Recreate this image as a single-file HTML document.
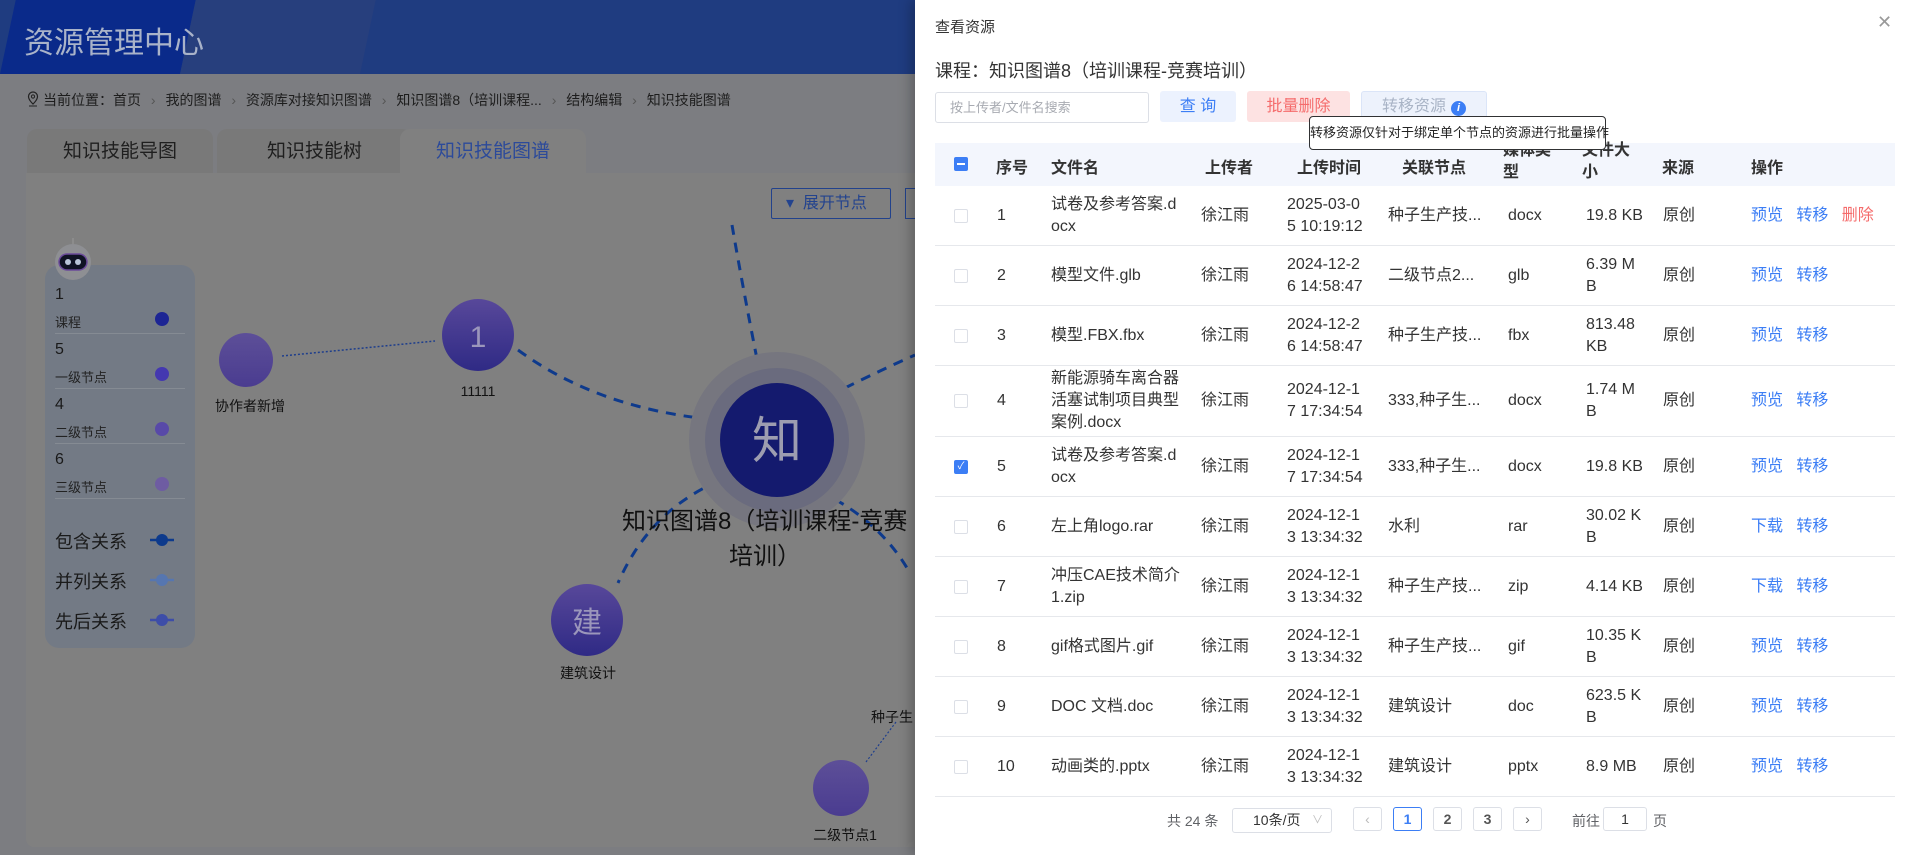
<!DOCTYPE html>
<html><head><meta charset="utf-8"><style>
*{margin:0;padding:0;box-sizing:border-box}
body{width:1911px;height:855px;overflow:hidden;position:relative;font-family:"Liberation Sans","Noto Sans CJK SC",sans-serif;background:#7c7d81;color:#1a1a1a}
.a{position:absolute;white-space:nowrap}
.hd{position:absolute;left:0;top:0;width:915px;height:74px;background:#1f3c80;overflow:hidden}
.card{position:absolute;left:26px;top:173px;width:900px;height:674px;background:#808080;border-radius:0 0 8px 8px}
.tab{position:absolute;top:129px;height:46px;border-radius:10px 10px 0 0;font-size:19px;text-align:center;line-height:46px;color:#1f1f1f}
.lg{position:absolute;left:45px;top:265px;width:150px;height:383px;background:#737a85;border-radius:14px}
.drawer{position:absolute;left:915px;top:0;width:996px;height:855px;background:#fff;box-shadow:-4px 0 12px rgba(0,0,0,.25)}
.btn{position:absolute;top:91px;height:31px;border-radius:3px;font-size:16px;line-height:31px;text-align:center}
.row{position:absolute;left:20px;width:960px;border-bottom:1px solid #e6e8ec;font-size:16px;color:#333}
.row .a{top:50%;transform:translateY(-50%);line-height:22px}
.cb{position:absolute;left:19px;top:50%;margin-top:-7px;width:14px;height:14px;border:1px solid #dcdfe6;border-radius:2px;background:#fff}
.bl{color:#3c7ef5}.rd{color:#f56c6c}
.pg{position:absolute;top:807px;height:24px;border:1px solid #dcdfe6;border-radius:3px;font-size:14px;text-align:center;line-height:22px;font-weight:bold;color:#555}
</style></head><body>
<div class="hd">
 <div style="position:absolute;left:0;top:0;width:180px;height:74px;background:#0a2a8a;transform:skewX(-12deg);transform-origin:0 100%"></div>
 <div style="position:absolute;left:180px;top:0;width:180px;height:74px;background:#273f7d;transform:skewX(-12deg);transform-origin:0 100%"></div>
 <div class="a" style="left:24px;top:18px;font-size:30px;color:#a9b3c9">资源管理中心</div>
</div>
<svg class="a" style="left:26px;top:90px" width="14" height="18" viewBox="0 0 14 18"><path d="M7 2a4.5 4.5 0 0 0-4.5 4.5C2.5 10 7 14 7 14s4.5-4 4.5-7.5A4.5 4.5 0 0 0 7 2z" fill="none" stroke="#222" stroke-width="1.2"/><circle cx="7" cy="6.5" r="1.6" fill="none" stroke="#222"/><path d="M3 16h8" stroke="#222"/></svg>
<div class="a" style="left:43px;top:90px;font-size:14px;color:#1d1d1d">当前位置：首页 <span style="color:#555;margin:0 6px">›</span> 我的图谱 <span style="color:#555;margin:0 6px">›</span> 资源库对接知识图谱 <span style="color:#555;margin:0 6px">›</span> 知识图谱8（培训课程... <span style="color:#555;margin:0 6px">›</span> 结构编辑 <span style="color:#555;margin:0 6px">›</span> 知识技能图谱</div>
<div class="tab" style="left:27px;width:186px;background:#797979">知识技能导图</div>
<div class="tab" style="left:217px;width:195px;background:#797979">知识技能树</div>
<div class="card"></div>
<div class="tab" style="left:400px;width:186px;background:#808080;color:#2c4a9a">知识技能图谱</div>
<div class="a" style="left:771px;top:188px;width:120px;height:31px;border:1px solid #22428c;border-radius:2px;font-size:16px;color:#23438e;line-height:29px;padding-left:14px">▾&nbsp; 展开节点</div>
<div class="a" style="left:905px;top:188px;width:12px;height:31px;border:1px solid #22428c;border-right:none"></div>
<svg class="a" style="left:0;top:0" width="915" height="855">
 <g fill="none" stroke="#0e3a8c" stroke-width="3" stroke-dasharray="10 8">
  <path d="M518 350 Q600 410 719 420"/>
  <path d="M732 225 Q745 300 762 384"/>
  <path d="M829 396 Q870 375 915 355"/>
  <path d="M719 481 Q650 510 618 583"/>
  <path d="M819 491 Q880 520 910 573"/>
 </g>
 <path d="M282 356 L435 341" stroke="#1e3e8c" stroke-width="1.5" stroke-dasharray="2 2" fill="none"/>
 <path d="M866 762 L896 722" stroke="#1e3e8c" stroke-width="1.2" stroke-dasharray="2 2" fill="none"/>
 <defs><linearGradient id="g" x1="0" y1="0" x2="0" y2="1"><stop offset="0" stop-color="#58489a"/><stop offset="1" stop-color="#2f2a85"/></linearGradient>
 <linearGradient id="g2" x1="0" y1="0" x2="0" y2="1"><stop offset="0" stop-color="#5d4f98"/><stop offset="1" stop-color="#4a3c90"/></linearGradient></defs>
 <circle cx="777" cy="440" r="88" fill="#76767f"/><circle cx="777" cy="440" r="72" fill="#6a6b7e"/><circle cx="777" cy="440" r="57" fill="#141a6e"/>
 <circle cx="478" cy="335" r="36" fill="url(#g)"/>
 <circle cx="246" cy="360" r="27" fill="url(#g2)"/>
 <circle cx="587" cy="620" r="36" fill="url(#g)"/>
 <circle cx="841" cy="788" r="28" fill="url(#g2)"/>
 <text x="777" y="458" font-size="50" fill="#9d9db0" text-anchor="middle" font-family="Noto Sans CJK SC">知</text>
 <text x="478" y="347" font-size="30" fill="#9b96bb" text-anchor="middle">1</text>
 <text x="587" y="633" font-size="30" fill="#9b96bb" text-anchor="middle" font-family="Noto Sans CJK SC">建</text>
 <g font-family="Liberation Sans,Noto Sans CJK SC" fill="#111" text-anchor="middle">
 <text x="478" y="396" font-size="14">11111</text>
 <text x="250" y="411" font-size="14">协作者新增</text>
 <text x="588" y="678" font-size="14">建筑设计</text>
 <text x="845" y="840" font-size="14">二级节点1</text>
 <text x="871" y="722" font-size="14" text-anchor="start">种子生</text>
 <text x="622" y="529" font-size="24" text-anchor="start">知识图谱8（培训课程-竞赛</text>
 <text x="765" y="564" font-size="24">培训）</text>
 </g>
</svg>
<div class="lg"></div>
<svg class="a" style="left:52px;top:230px" width="42" height="55"><circle cx="21" cy="32" r="18" fill="#8e8f93"/><rect x="7" y="24" width="28" height="16" rx="8" fill="#0f1324" stroke="#6a4a9a" stroke-width="1.5"/><circle cx="16" cy="32" r="3" fill="#b8c4d8"/><circle cx="26" cy="32" r="3" fill="#b8c4d8"/><path d="M21 14v-6" stroke="#999" /></svg>
<div class="a" style="left:55px;top:286px;font-size:16px">1</div><div class="a" style="left:55px;top:312px;font-size:13px;color:#222">课程</div><div class="a" style="left:155px;top:312px;width:14px;height:14px;border-radius:50%;background:#1d2594"></div>
<div class="a" style="left:55px;top:333px;width:130px;height:1px;background:#858b93"></div>
<div class="a" style="left:55px;top:341px;font-size:16px">5</div><div class="a" style="left:55px;top:367px;font-size:13px;color:#222">一级节点</div><div class="a" style="left:155px;top:367px;width:14px;height:14px;border-radius:50%;background:#4438b0"></div>
<div class="a" style="left:55px;top:388px;width:130px;height:1px;background:#858b93"></div>
<div class="a" style="left:55px;top:396px;font-size:16px">4</div><div class="a" style="left:55px;top:422px;font-size:13px;color:#222">二级节点</div><div class="a" style="left:155px;top:422px;width:14px;height:14px;border-radius:50%;background:#5849a8"></div>
<div class="a" style="left:55px;top:443px;width:130px;height:1px;background:#858b93"></div>
<div class="a" style="left:55px;top:451px;font-size:16px">6</div><div class="a" style="left:55px;top:477px;font-size:13px;color:#222">三级节点</div><div class="a" style="left:155px;top:477px;width:14px;height:14px;border-radius:50%;background:#6e5ca2"></div>
<div class="a" style="left:55px;top:498px;width:130px;height:1px;background:#858b93"></div>
<div class="a" style="left:55px;top:528px;font-size:18px">包含关系</div>
<div class="a" style="left:55px;top:568px;font-size:18px">并列关系</div>
<div class="a" style="left:55px;top:608px;font-size:18px">先后关系</div>
<svg class="a" style="left:148px;top:530px" width="30" height="100"><g stroke-width="2.5"><path d="M2 10h24" stroke="#0d3a8c"/><circle cx="14" cy="10" r="6" fill="#0d3a8c"/><path d="M2 50h24" stroke="#5676b0"/><circle cx="14" cy="50" r="6" fill="#5676b0"/><path d="M2 90h24" stroke="#3d4da8"/><circle cx="14" cy="90" r="6" fill="#3d4da8"/></g></svg>

<div class="drawer">
 <div class="a" style="left:20px;top:16px;font-size:15px;color:#333">查看资源</div>
 <div class="a" style="left:962px;top:12px;font-size:18px;color:#999">✕</div>
 <div class="a" style="left:20px;top:57px;font-size:18px;color:#333">课程：知识图谱8（培训课程-竞赛培训）</div>
 <div class="a" style="left:20px;top:92px;width:214px;height:31px;border:1px solid #dcdfe6;border-radius:3px;font-size:13px;color:#a8abb2;line-height:29px;padding-left:14px">按上传者/文件名搜索</div>
 <div class="btn" style="left:245px;width:76px;background:#ecf2fe;color:#3c7ef5">查 询</div>
 <div class="btn" style="left:332px;width:103px;background:#fde2e2;color:#f56c6c">批量删除</div>
 <div class="btn" style="left:446px;width:126px;background:#edf2fc;border:1px solid #dbe5f8;color:#a9b4c6;text-align:left;padding-left:20px;line-height:29px">转移资源</div>
 <div class="a" style="left:536px;top:101px;width:15px;height:15px;border-radius:50%;background:#3c7ef5;color:#fff;font-size:11px;font-style:italic;font-weight:bold;text-align:center;line-height:15px">i</div>
 <div class="a" style="left:394px;top:116px;width:297px;height:34px;border:1px solid #303133;border-radius:4px;background:#fff;font-size:13px;color:#222;line-height:32px;text-align:center;z-index:3">转移资源仅针对于绑定单个节点的资源进行批量操作</div>
 <div class="a" style="left:20px;top:143px;width:960px;height:43px;background:#f3f6fd;font-size:16px;font-weight:bold;color:#333">
  <div class="a" style="left:19px;top:14px;width:14px;height:14px;background:#3c7ef5;border-radius:2px"><div style="margin:6px 3px;height:2px;background:#fff"></div></div>
  <div class="a" style="left:61px;top:11px">序号</div><div class="a" style="left:116px;top:11px">文件名</div><div class="a" style="left:270px;top:11px">上传者</div><div class="a" style="left:362px;top:11px">上传时间</div><div class="a" style="left:467px;top:11px">关联节点</div>
  <div class="a" style="left:568px;top:-3px;line-height:22px">媒体类<br>型</div><div class="a" style="left:647px;top:-3px;line-height:22px">文件大<br>小</div><div class="a" style="left:727px;top:11px">来源</div><div class="a" style="left:816px;top:11px">操作</div>
 </div>
 <div class="row" style="top:186px;height:60px"><div class="cb"></div><div class="a" style="left:62px">1</div><div class="a" style="left:116px">试卷及参考答案.d<br>ocx</div><div class="a" style="left:266px">徐江雨</div><div class="a" style="left:352px">2025-03-0<br>5 10:19:12</div><div class="a" style="left:453px">种子生产技...</div><div class="a" style="left:573px">docx</div><div class="a" style="left:651px">19.8 KB</div><div class="a" style="left:728px">原创</div><div class="a" style="left:816px"><span class="bl">预览</span>&nbsp;&nbsp;&nbsp;<span class="bl">转移</span>&nbsp;&nbsp;&nbsp;<span class="rd">删除</span></div></div>
 <div class="row" style="top:246px;height:60px"><div class="cb"></div><div class="a" style="left:62px">2</div><div class="a" style="left:116px">模型文件.glb</div><div class="a" style="left:266px">徐江雨</div><div class="a" style="left:352px">2024-12-2<br>6 14:58:47</div><div class="a" style="left:453px">二级节点2...</div><div class="a" style="left:573px">glb</div><div class="a" style="left:651px">6.39 M<br>B</div><div class="a" style="left:728px">原创</div><div class="a" style="left:816px"><span class="bl">预览</span>&nbsp;&nbsp;&nbsp;<span class="bl">转移</span></div></div>
 <div class="row" style="top:306px;height:60px"><div class="cb"></div><div class="a" style="left:62px">3</div><div class="a" style="left:116px">模型.FBX.fbx</div><div class="a" style="left:266px">徐江雨</div><div class="a" style="left:352px">2024-12-2<br>6 14:58:47</div><div class="a" style="left:453px">种子生产技...</div><div class="a" style="left:573px">fbx</div><div class="a" style="left:651px">813.48<br>KB</div><div class="a" style="left:728px">原创</div><div class="a" style="left:816px"><span class="bl">预览</span>&nbsp;&nbsp;&nbsp;<span class="bl">转移</span></div></div>
 <div class="row" style="top:366px;height:71px"><div class="cb"></div><div class="a" style="left:62px">4</div><div class="a" style="left:116px">新能源骑车离合器<br>活塞试制项目典型<br>案例.docx</div><div class="a" style="left:266px">徐江雨</div><div class="a" style="left:352px">2024-12-1<br>7 17:34:54</div><div class="a" style="left:453px">333,种子生...</div><div class="a" style="left:573px">docx</div><div class="a" style="left:651px">1.74 M<br>B</div><div class="a" style="left:728px">原创</div><div class="a" style="left:816px"><span class="bl">预览</span>&nbsp;&nbsp;&nbsp;<span class="bl">转移</span></div></div>
 <div class="row" style="top:437px;height:60px"><div class="cb" style="background:#3c7ef5;border-color:#3c7ef5;color:#fff;font-size:10px;text-align:center;line-height:12px">✓</div><div class="a" style="left:62px">5</div><div class="a" style="left:116px">试卷及参考答案.d<br>ocx</div><div class="a" style="left:266px">徐江雨</div><div class="a" style="left:352px">2024-12-1<br>7 17:34:54</div><div class="a" style="left:453px">333,种子生...</div><div class="a" style="left:573px">docx</div><div class="a" style="left:651px">19.8 KB</div><div class="a" style="left:728px">原创</div><div class="a" style="left:816px"><span class="bl">预览</span>&nbsp;&nbsp;&nbsp;<span class="bl">转移</span></div></div>
 <div class="row" style="top:497px;height:60px"><div class="cb"></div><div class="a" style="left:62px">6</div><div class="a" style="left:116px">左上角logo.rar</div><div class="a" style="left:266px">徐江雨</div><div class="a" style="left:352px">2024-12-1<br>3 13:34:32</div><div class="a" style="left:453px">水利</div><div class="a" style="left:573px">rar</div><div class="a" style="left:651px">30.02 K<br>B</div><div class="a" style="left:728px">原创</div><div class="a" style="left:816px"><span class="bl">下载</span>&nbsp;&nbsp;&nbsp;<span class="bl">转移</span></div></div>
 <div class="row" style="top:557px;height:60px"><div class="cb"></div><div class="a" style="left:62px">7</div><div class="a" style="left:116px">冲压CAE技术简介<br>1.zip</div><div class="a" style="left:266px">徐江雨</div><div class="a" style="left:352px">2024-12-1<br>3 13:34:32</div><div class="a" style="left:453px">种子生产技...</div><div class="a" style="left:573px">zip</div><div class="a" style="left:651px">4.14 KB</div><div class="a" style="left:728px">原创</div><div class="a" style="left:816px"><span class="bl">下载</span>&nbsp;&nbsp;&nbsp;<span class="bl">转移</span></div></div>
 <div class="row" style="top:617px;height:60px"><div class="cb"></div><div class="a" style="left:62px">8</div><div class="a" style="left:116px">gif格式图片.gif</div><div class="a" style="left:266px">徐江雨</div><div class="a" style="left:352px">2024-12-1<br>3 13:34:32</div><div class="a" style="left:453px">种子生产技...</div><div class="a" style="left:573px">gif</div><div class="a" style="left:651px">10.35 K<br>B</div><div class="a" style="left:728px">原创</div><div class="a" style="left:816px"><span class="bl">预览</span>&nbsp;&nbsp;&nbsp;<span class="bl">转移</span></div></div>
 <div class="row" style="top:677px;height:60px"><div class="cb"></div><div class="a" style="left:62px">9</div><div class="a" style="left:116px">DOC 文档.doc</div><div class="a" style="left:266px">徐江雨</div><div class="a" style="left:352px">2024-12-1<br>3 13:34:32</div><div class="a" style="left:453px">建筑设计</div><div class="a" style="left:573px">doc</div><div class="a" style="left:651px">623.5 K<br>B</div><div class="a" style="left:728px">原创</div><div class="a" style="left:816px"><span class="bl">预览</span>&nbsp;&nbsp;&nbsp;<span class="bl">转移</span></div></div>
 <div class="row" style="top:737px;height:60px"><div class="cb"></div><div class="a" style="left:62px">10</div><div class="a" style="left:116px">动画类的.pptx</div><div class="a" style="left:266px">徐江雨</div><div class="a" style="left:352px">2024-12-1<br>3 13:34:32</div><div class="a" style="left:453px">建筑设计</div><div class="a" style="left:573px">pptx</div><div class="a" style="left:651px">8.9 MB</div><div class="a" style="left:728px">原创</div><div class="a" style="left:816px"><span class="bl">预览</span>&nbsp;&nbsp;&nbsp;<span class="bl">转移</span></div></div>
 <div class="a" style="left:252px;top:811px;font-size:14px;color:#606266">共 24 条</div>
 <div class="a" style="left:317px;top:808px;width:100px;height:25px;border:1px solid #dcdfe6;border-radius:3px;font-size:14px;color:#333;line-height:23px;padding-left:20px">10条/页<span style="position:absolute;right:8px;color:#bbb;font-size:11px">∨</span></div>
 <div class="pg" style="left:438px;width:29px;color:#bbb;font-weight:normal">‹</div>
 <div class="pg" style="left:478px;width:29px;border-color:#3c7ef5;color:#3c7ef5">1</div>
 <div class="pg" style="left:518px;width:29px">2</div>
 <div class="pg" style="left:558px;width:29px">3</div>
 <div class="pg" style="left:598px;width:29px;font-weight:normal">›</div>
 <div class="a" style="left:657px;top:811px;font-size:14px;color:#606266">前往</div>
 <div class="a" style="left:688px;top:807px;width:44px;height:24px;border:1px solid #dcdfe6;border-radius:3px;font-size:14px;text-align:center;line-height:22px;color:#333">1</div>
 <div class="a" style="left:738px;top:811px;font-size:14px;color:#606266">页</div>
</div>
</body></html>
